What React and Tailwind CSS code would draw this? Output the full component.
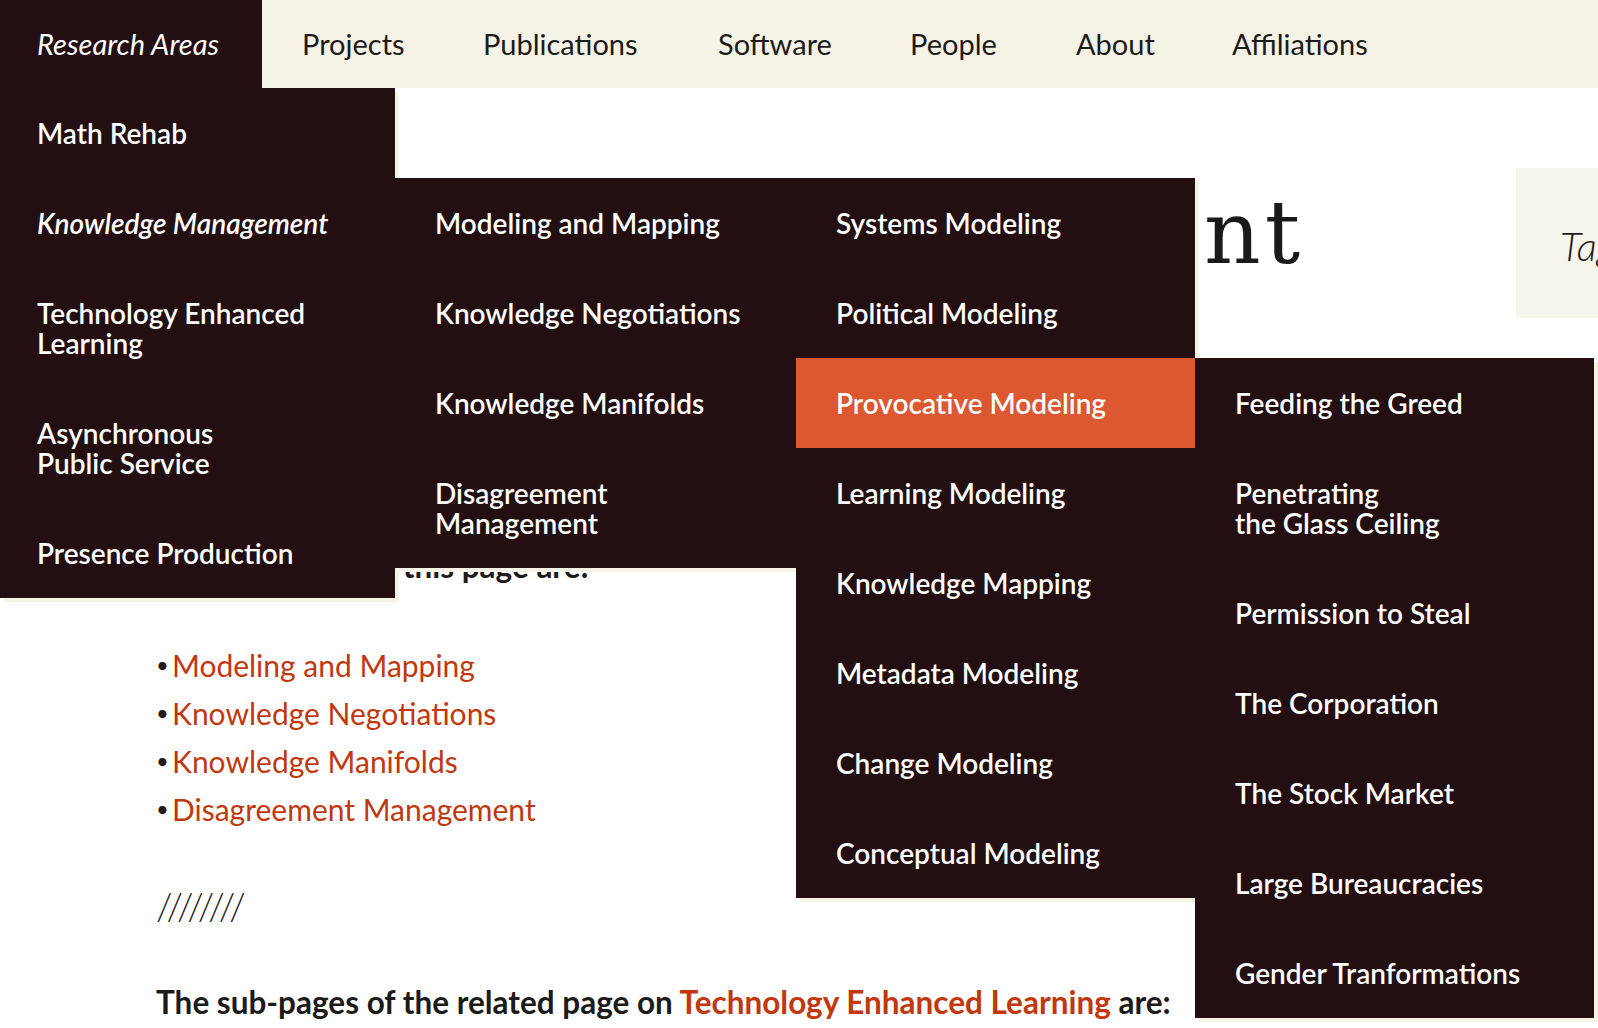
import React from "react";

const DARK = "bg-[#230f12]";

const navItems = [
  { label: "Projects", width: "w-[181px]" },
  { label: "Publications", width: "w-[235px]" },
  { label: "Software", width: "w-[192px]" },
  { label: "People", width: "w-[166px]" },
  { label: "About", width: "w-[156px]" },
  { label: "Affiliations", width: "w-[200px]" },
];

const provocative = [
  { label: "Feeding the Greed" },
  { label: ["Penetrating", "the Glass Ceiling"] },
  { label: "Permission to Steal" },
  { label: "The Corporation" },
  { label: "The Stock Market" },
  { label: "Large Bureaucracies" },
  { label: "Gender Tranformations" },
];

const modeling = [
  { label: "Systems Modeling" },
  { label: "Political Modeling" },
  { label: "Provocative Modeling", active: true, children: provocative },
  { label: "Learning Modeling" },
  { label: "Knowledge Mapping" },
  { label: "Metadata Modeling" },
  { label: "Change Modeling" },
  { label: "Conceptual Modeling" },
];

const knowledge = [
  { label: "Modeling and Mapping", children: modeling },
  { label: "Knowledge Negotiations" },
  { label: "Knowledge Manifolds" },
  { label: ["Disagreement", "Management"] },
];

const research = [
  { label: "Math Rehab" },
  { label: "Knowledge Management", italic: true, children: knowledge },
  { label: ["Technology Enhanced", "Learning"] },
  { label: ["Asynchronous", "Public Service"] },
  { label: "Presence Production" },
];

// widths per depth, written out so tailwind picks them up
const levelClass = [
  "top-full left-0 w-[395px]",
  "top-0 left-full w-[401px]",
  "top-0 left-full w-[399px]",
  "top-0 left-full w-[399px]",
];

const Label = ({ label, italic }) => (
  <span className={italic ? "italic" : "not-italic"}>
    {Array.isArray(label) ? (
      <>
        {label[0]}
        <br />
        {label[1]}
      </>
    ) : (
      label
    )}
  </span>
);

const Menu = ({ items, depth }) => (
  <ul
    className={`absolute z-10 ${levelClass[depth]} ${DARK} shadow-[4px_4px_0_#f5f2e6]`}
  >
    {items.map((item, i) => (
      <li
        key={i}
        className={`relative whitespace-nowrap py-[30px] text-[28px] leading-[30px] font-semibold not-italic text-white ${
          depth === 0 ? "pl-[37px] pr-4" : "pl-10 pr-4"
        } ${item.active ? "bg-[#db5831]" : ""}`}
      >
        <Label label={item.label} italic={item.italic} />
        {item.children && <Menu items={item.children} depth={depth + 1} />}
      </li>
    ))}
  </ul>
);

const subPages = [
  "Modeling and Mapping",
  "Knowledge Negotiations",
  "Knowledge Manifolds",
  "Disagreement Management",
];

export default function App() {
  return (
    <div className="relative min-h-[1028px] w-full overflow-hidden bg-white font-['Lato','Liberation_Sans',sans-serif] text-[#1d1a1a]">
      <nav className="flex h-[88px] items-stretch bg-[#f5f2e6] text-[29px]">
        <div className={`relative flex w-[262px] items-center ${DARK} pl-[37px]`}>
          <span className="italic text-white">Research Areas</span>
          <Menu items={research} depth={0} />
        </div>
        {navItems.map((n) => (
          <a key={n.label} className={`flex ${n.width} shrink-0 items-center pl-10`}>
            {n.label}
          </a>
        ))}
      </nav>

      <div className="flex">
        <main className="w-[1516px] shrink-0 pl-[156px]">
          <h1 className="mt-[101px] flex w-[1148px] justify-end whitespace-nowrap font-['DejaVu_Serif',serif] text-[88px] leading-[88px] tracking-[4px] text-[#1a1a1a]">
            <span className="shrink-0">Knowledge Management</span>
          </h1>

          <p className="mt-[265px] text-[31.5px] font-bold leading-[48px]">
            The sub-pages of this page are:
          </p>

          <ul className="mt-[51px] text-[30px] leading-[48px]">
            {subPages.map((s) => (
              <li key={s} className="flex">
                <span className="w-4 text-[22px]">•</span>
                <a className="text-[#c1370e]">{s}</a>
              </li>
            ))}
          </ul>

          <p className="mt-[48px] text-[38px] font-light leading-[48px] tracking-[2px]">
            ////////
          </p>

          <p className="mt-[49px] text-[31.5px] font-bold leading-[48px]">
            The sub-pages of the related page on{" "}
            <a className="text-[#c1370e]">Technology Enhanced Learning</a> are:
          </p>
        </main>

        <aside className="mt-[80px] h-[150px] w-[300px] shrink-0 bg-[#f6f5ec] pl-[44px] pt-[48px]">
          <span className="text-[40px] font-light italic">Tags</span>
        </aside>
      </div>
    </div>
  );
}
